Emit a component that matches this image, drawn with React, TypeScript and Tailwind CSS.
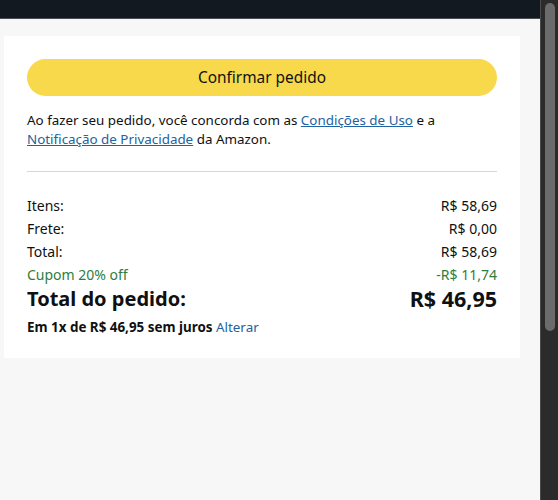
import React from 'react';

const Row: React.FC<{ label: string; value: string; green?: boolean }> = ({ label, value, green }) => (
  <div className={`flex justify-between leading-[23px] text-[14px] ${green ? 'text-[#2f7d3c]' : 'text-[#0f1111]'}`}>
    <span>{label}</span>
    <span>{value}</span>
  </div>
);

const App: React.FC = () => {
  return (
    <div className="flex h-[500px] w-[558px] overflow-hidden font-['Noto_Sans',sans-serif] text-[#0f1111]">
      <div className="flex flex-1 flex-col">
        <header className="h-[19px] shrink-0 border-b border-[#4a4d52] bg-[#131921]" />
        <main className="flex-1 bg-[#f7f7f7] pl-[4px] pr-[20px] pt-[17px]">
          <section className="bg-white px-[23px] pt-[23px] pb-[21px]">
            <button className="h-[37px] w-full rounded-full bg-[#f8d94c] text-[15.4px] text-[#0f1111]">
              Confirmar pedido
            </button>
            <p className="mt-[15px] text-[13.4px] leading-[19px]">
              Ao fazer seu pedido, você concorda com as{' '}
              <a className="text-[#2162a1] underline">Condições de Uso</a> e a{' '}
              <a className="text-[#2162a1] underline">Notificação de Privacidade</a> da Amazon.
            </p>
            <hr className="mt-[22px] mb-[22px] border-t border-[#d5d9d9]" />
            <Row label="Itens:" value="R$ 58,69" />
            <Row label="Frete:" value="R$ 0,00" />
            <Row label="Total:" value="R$ 58,69" />
            <Row label="Cupom 20% off" value="-R$ 11,74" green />
            <div className="flex justify-between font-bold leading-[25px]">
              <span className="text-[20px]">Total do pedido:</span>
              <span className="text-[21.5px]">R$ 46,95</span>
            </div>
            <div className="mt-[6px] text-[13.4px] leading-[20px]">
              <span className="font-bold">Em 1x de R$ 46,95 sem juros</span>{' '}
              <a className="text-[#2162a1]">Alterar</a>
            </div>
          </section>
        </main>
      </div>
      <div className="flex w-[18px] shrink-0 justify-center border-l border-[#4a4a4a] bg-[#2b2b2b] pt-[3px]">
        <div className="h-[328px] w-[10px] rounded-full bg-[#6b6b6b]" />
      </div>
    </div>
  );
};

export default App;
